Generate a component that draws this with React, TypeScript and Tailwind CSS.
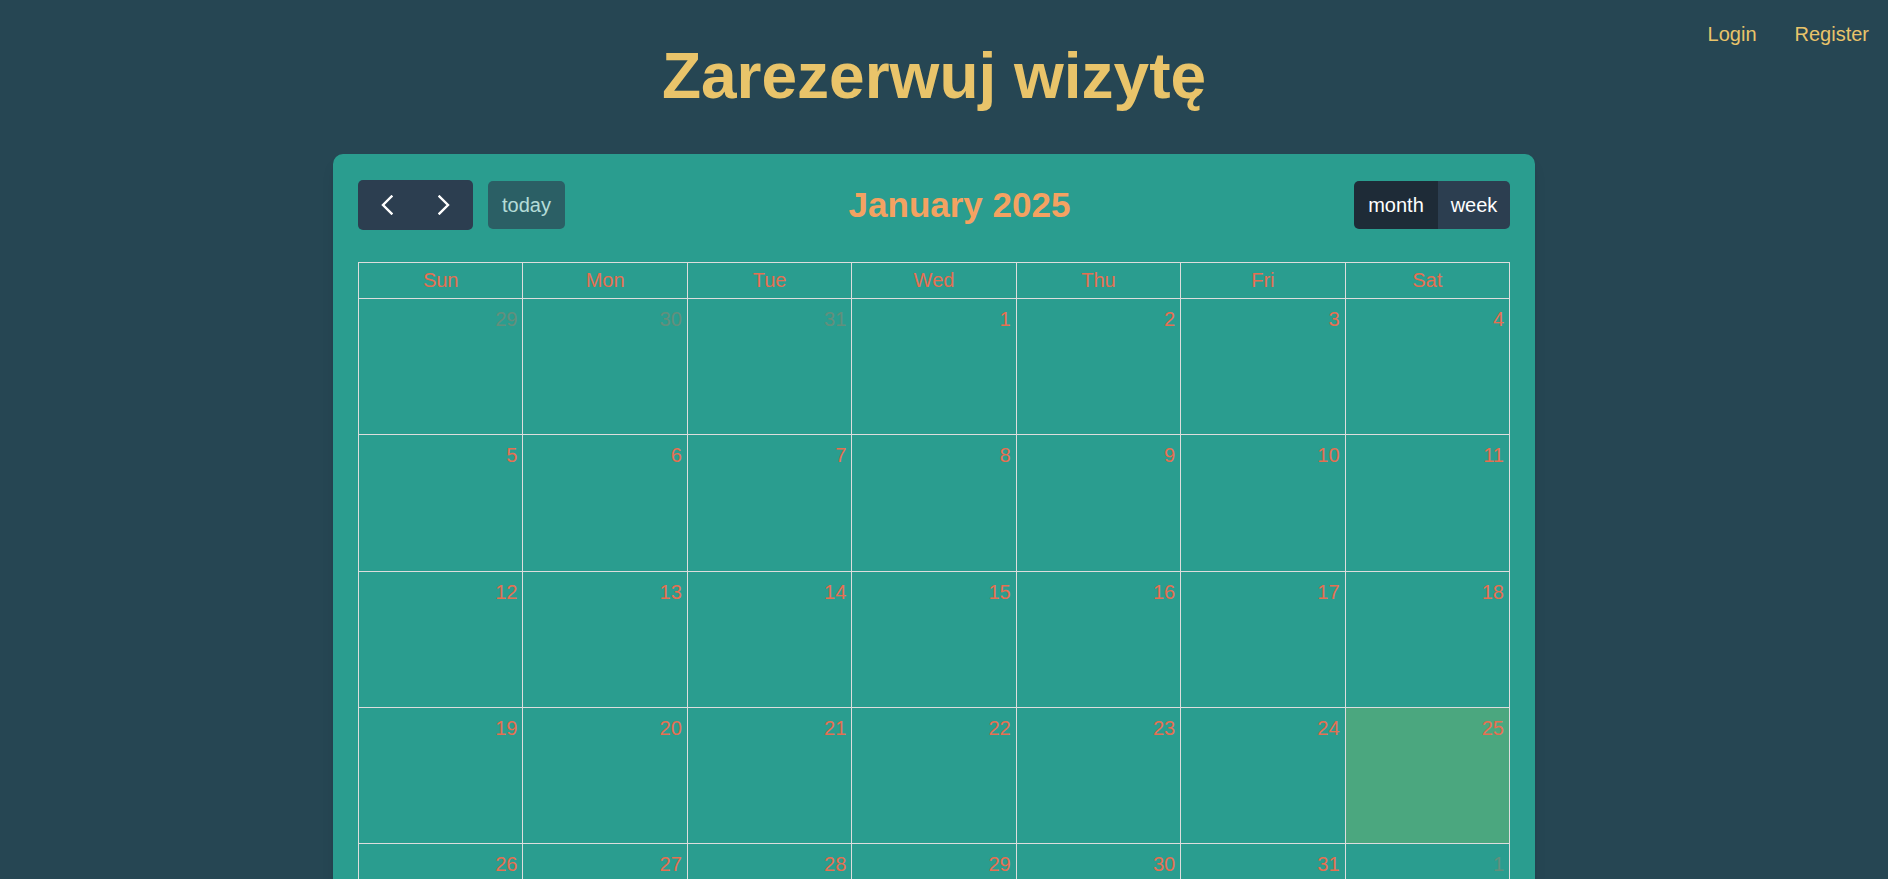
import React from "react";

const DAYS = ["Sun", "Mon", "Tue", "Wed", "Thu", "Fri", "Sat"];

type Cell = { day: number; other?: boolean; today?: boolean };

// January 2025, six weeks as the month grid shows them
function buildWeeks(): Cell[][] {
  const cells: Cell[] = [];
  [29, 30, 31].forEach((d) => cells.push({ day: d, other: true }));
  for (let d = 1; d <= 31; d++) cells.push({ day: d, today: d === 25 });
  let d = 1;
  while (cells.length < 42) cells.push({ day: d++, other: true });
  const weeks: Cell[][] = [];
  for (let i = 0; i < 42; i += 7) weeks.push(cells.slice(i, i + 7));
  return weeks;
}

function Chevron({ dir }: { dir: "left" | "right" }) {
  return (
    <svg width="12" height="20" viewBox="0 0 12 20" fill="none">
      <polyline
        points={dir === "left" ? "10.5,1.5 2,10 10.5,18.5" : "1.5,1.5 10,10 1.5,18.5"}
        stroke="#ffffff"
        strokeWidth="2.4"
        strokeLinecap="square"
      />
    </svg>
  );
}

function Toolbar() {
  return (
    <div className="flex items-center justify-between h-[50px] mb-[32px]">
      <div className="flex items-center gap-[15px]">
        <div className="flex h-[50px] rounded-[5px] bg-[#2c3e50] overflow-hidden">
          <button className="w-[57px] h-full flex items-center justify-center">
            <Chevron dir="left" />
          </button>
          <button className="w-[58px] h-full flex items-center justify-center">
            <Chevron dir="right" />
          </button>
        </div>
        <button className="h-[48px] w-[77px] rounded-[5px] bg-[#2c3e50] text-white opacity-65 text-[20px] leading-[30px]">
          today
        </button>
      </div>
      <h2 className="text-[35px] leading-[40px] font-bold text-[#f4a261]">January 2025</h2>
      <div className="flex h-[48px] rounded-[5px] overflow-hidden text-white text-[20px] leading-[30px]">
        <button className="w-[84px] h-full bg-[#1e2b37]">month</button>
        <button className="w-[72px] h-full bg-[#2c3e50]">week</button>
      </div>
    </div>
  );
}

function MonthGrid() {
  const weeks = buildWeeks();
  return (
    <div className="grid grid-cols-7 border-l border-t border-[#dddddd]">
      {DAYS.map((d) => (
        <div
          key={d}
          className="h-[36px] border-r border-b border-[#dddddd] flex items-center justify-center text-[20px] leading-[23px] text-[#e76f51]"
        >
          {d}
        </div>
      ))}
      {weeks.map((week, wi) =>
        week.map((c, ci) => (
          <div
            key={wi + "-" + ci}
            className={
              "h-[136.3px] border-r border-b border-[#dddddd] flex justify-end pt-[9px] pr-[5px] " +
              (c.today ? "bg-[#4ba77f]" : "")
            }
          >
            <span
              className={
                "text-[20px] leading-[23px] text-[#e76f51] " + (c.other ? "opacity-30" : "")
              }
            >
              {c.day}
            </span>
          </div>
        ))
      )}
    </div>
  );
}

export default function App() {
  return (
    <div className="relative min-h-screen bg-[#264653] font-['Liberation_Sans',Arial,sans-serif]">
      {/* top-right links */}
      <nav className="absolute top-[19px] right-[19px] flex gap-[38px] text-[20px] leading-[30px] text-[#e9c46a]">
        <a href="#">Login</a>
        <a href="#">Register</a>
      </nav>

      <main className="pr-[20px] pt-[40px]">
        <h1 className="text-center text-[64px] leading-[72px] font-bold text-[#e9c46a]">
          Zarezerwuj wizytę
        </h1>

        <div className="mx-auto mt-[42px] w-[1202px] rounded-[10px] bg-[#2a9d8f] px-[25px] pt-[26px] pb-[25px] shadow-lg">
          <Toolbar />
          <MonthGrid />
        </div>
      </main>
    </div>
  );
}
